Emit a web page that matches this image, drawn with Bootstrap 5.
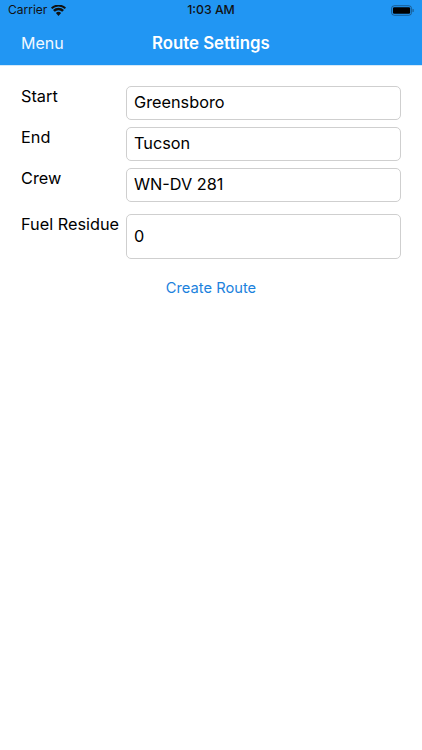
<!doctype html>
<html lang="en">
<head>
<meta charset="utf-8">
<title>Route Settings</title>
<link href="https://cdn.jsdelivr.net/npm/bootstrap@5.3.0/dist/css/bootstrap.min.css" rel="stylesheet">
<style>
body { font-family: Inter, "Liberation Sans", sans-serif; background: #fff; color: #000; }
.app-head { background: #2196f3; height: 66px; border-bottom: 1px solid #d5e9f8; color: #fff; }
.status-row { height: 20px; padding: 0 8px; color: #111; font-size: 12px; line-height: 20px; }
.status-side { width: 120px; }
.status-time { font-weight: 500; font-size: 12.3px; }
.title-row { height: 45px; padding: 0 21px; }
.menu-txt { font-size: 16px; width: 131px; color: #f2f9ff; }
.title-txt { font-size: 16.8px; font-weight: 600; padding-top: 2px; }
.form-zone { padding: 20px 21px 0; }
.field-line { margin-bottom: 6.75px; }
.field-lbl { width: 105px; flex: none; font-size: 16.3px; line-height: 20px; margin-top: -1px; padding-top: 1px; white-space: nowrap; }
.field-box.form-control { height: 34px; width: 275px; flex: none; padding: 0 7px 2px; border: 1px solid #cfcfcf; border-radius: 5px; font-size: 16.3px; color: #000; }
.field-line-tall { margin-top: 12.5px; margin-bottom: 0; }
.field-box-tall.form-control { height: 45px; }
.make-btn.btn { font-size: 14.7px; color: #1c82dd; padding: 0; border: 0; }
.make-wrap { margin-top: 15px; }
</style>
</head>
<body>
<header class="app-head">
  <div class="status-row d-flex justify-content-between align-items-center">
    <div class="status-side d-flex align-items-center gap-1">
      <span>Carrier</span>
      <svg width="15" height="11" viewBox="0 0 15 11" aria-hidden="true"><path d="M7.5 11 4.9 8a3.6 3.6 0 0 1 5.2 0zM3.8 6.8 2 4.9a7.8 7.8 0 0 1 11 0l-1.8 1.9a5.3 5.3 0 0 0-7.4 0zM1.2 4 0 2.6a10.8 10.8 0 0 1 15 0L13.8 4a9 9 0 0 0-12.6 0z" fill="#111"/></svg>
    </div>
    <span class="status-time">1:03 AM</span>
    <div class="status-side d-flex justify-content-end align-items-center">
      <svg width="23" height="11" viewBox="0 0 24 11" aria-hidden="true"><rect x=".5" y=".5" width="21" height="10" rx="3" fill="none" stroke="#123" stroke-opacity=".5"/><rect x="2" y="2" width="18" height="7" rx="1.5" fill="#000"/><rect x="22.5" y="4" width="1.2" height="3" fill="#123" fill-opacity=".5"/></svg>
    </div>
  </div>
  <div class="title-row d-flex align-items-center">
    <span class="menu-txt">Menu</span>
    <span class="title-txt">Route Settings</span>
  </div>
</header>
<main class="form-zone">
  <form>
    <div class="field-line d-flex">
      <label class="field-lbl" for="f1">Start</label>
      <input id="f1" class="field-box form-control" value="Greensboro">
    </div>
    <div class="field-line d-flex">
      <label class="field-lbl" for="f2">End</label>
      <input id="f2" class="field-box form-control" value="Tucson">
    </div>
    <div class="field-line d-flex">
      <label class="field-lbl" for="f3">Crew</label>
      <input id="f3" class="field-box form-control" value="WN-DV 281">
    </div>
    <div class="field-line field-line-tall d-flex">
      <label class="field-lbl" for="f4">Fuel Residue</label>
      <input id="f4" class="field-box field-box-tall form-control" value="0">
    </div>
    <div class="make-wrap text-center">
      <button type="button" class="make-btn btn">Create Route</button>
    </div>
  </form>
</main>
<script src="https://cdn.jsdelivr.net/npm/bootstrap@5.3.0/dist/js/bootstrap.bundle.min.js"></script>
</body>
</html>
